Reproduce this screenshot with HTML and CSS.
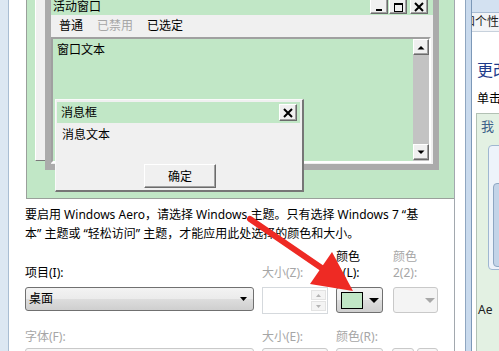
FILE: index.html
```html
<!DOCTYPE html>
<html lang="zh-CN">
<head>
<meta charset="utf-8">
<title>窗口颜色和外观</title>
<link rel="stylesheet" href="styles.css">
</head>
<body>
<div class="frame-left"></div>
<div class="dialog">
  <div class="preview">
    <div class="win-inactive"></div>
    <div class="win-active">
      <div class="titlebar">
        <span class="title-text">活动窗口</span>
        <div class="caption-btns">
          <span class="cbtn"><svg width="10" height="10" viewBox="0 0 10 10"><rect x="2" y="7" width="6" height="2" fill="#000"/></svg></span>
          <span class="cbtn"><svg width="10" height="10" viewBox="0 0 10 10"><rect x="1.5" y="1.5" width="8" height="8" fill="none" stroke="#000" stroke-width="1"/><rect x="1" y="1" width="9" height="2" fill="#000"/></svg></span>
          <span class="cbtn close"><svg width="10" height="10" viewBox="0 0 10 10"><path d="M1 1 L9 9 M9 1 L1 9" stroke="#000" stroke-width="2"/></svg></span>
        </div>
      </div>
      <div class="menubar">
        <span>普通</span>
        <span class="disabled">已禁用</span>
        <span>已选定</span>
      </div>
      <div class="client">
        <div class="client-text">窗口文本</div>
        <div class="scrollbar">
          <span class="sbtn"><svg width="8" height="5" viewBox="0 0 8 5"><path d="M0.5 4.5 L4 1 L7.5 4.5 Z" fill="#000"/></svg></span>
          <span class="strack"></span>
          <span class="sbtn down"><svg width="8" height="5" viewBox="0 0 8 5"><path d="M0.5 0.5 L4 4 L7.5 0.5 Z" fill="#000"/></svg></span>
        </div>
      </div>
    </div>
    <div class="msgbox">
      <div class="msg-title">
        <span>消息框</span>
        <span class="cbtn close"><svg width="10" height="10" viewBox="0 0 10 10"><path d="M1 1 L9 9 M9 1 L1 9" stroke="#000" stroke-width="2"/></svg></span>
      </div>
      <div class="msg-body">
        <div class="msg-text">消息文本</div>
        <div class="ok-btn">确定</div>
      </div>
    </div>
  </div>

  <div class="info">要启用 Windows Aero，请选择 Windows 主题。只有选择 Windows 7 “基<br>本” 主题或 “轻松访问” 主题，才能应用此处选择的颜色和大小。</div>

  <div class="row labels1">
    <div class="c1 lbl">项目(I):</div>
    <div class="c2 lbl disabled">大小(Z):</div>
    <div class="c3 lbl">颜色<br>1(L):</div>
    <div class="c4 lbl disabled">颜色<br>2(2):</div>
  </div>
  <div class="row ctrls">
    <div class="c1"><div class="combo"><span>桌面</span><svg width="7" height="4" viewBox="0 0 7 4"><path d="M0 0 L7 0 L3.5 4 Z" fill="#000"/></svg></div></div>
    <div class="c2"><div class="spin"><div class="spin-btns"><span><svg width="5" height="3" viewBox="0 0 5 3"><path d="M0 3 L2.5 0 L5 3 Z" fill="#b4b4b4"/></svg></span><span><svg width="5" height="3" viewBox="0 0 5 3"><path d="M0 0 L2.5 3 L5 0 Z" fill="#b4b4b4"/></svg></span></div></div></div>
    <div class="c3"><div class="colorbtn"><span class="swatch"></span><svg width="10" height="5" viewBox="0 0 10 5"><path d="M0 0 L10 0 L5 5 Z" fill="#000"/></svg></div></div>
    <div class="c4"><div class="colorbtn off"><svg width="10" height="5" viewBox="0 0 10 5"><path d="M0 0 L10 0 L5 5 Z" fill="#a8a8a8"/></svg></div></div>
  </div>
  <div class="row labels2">
    <div class="c1 lbl disabled">字体(F):</div>
    <div class="c2 lbl disabled">大小(E):</div>
    <div class="c3 lbl disabled wide">颜色(R):</div>
  </div>
  <div class="row boxes">
    <div class="c1"><div class="box"></div></div>
    <div class="c2"><div class="box"></div></div>
    <div class="c3"><div class="box"></div></div>
    <div class="c4 pair"><div class="box small"></div><div class="box small"></div></div>
  </div>
</div>
<div class="gap"></div>
<div class="frame-right"></div>
<div class="panel">
  <div class="panel-top"></div>
  <div class="crumb"><span>和个性化</span></div>
  <div class="panel-head">更改</div>
  <div class="panel-sub">单击</div>
  <div class="themes">
    <div class="themes-title">我</div>
    <div class="thumb"><div class="thumb-inner"></div></div>
    <div class="aero">Ae</div>
  </div>
</div>

<svg class="arrow" width="499" height="351" viewBox="0 0 499 351">
  <line x1="250" y1="219" x2="326" y2="271" stroke="#ee2a24" stroke-width="6" stroke-linecap="round"/>
  <polygon points="353,291 310,284 332,252" fill="#ee2a24"/>
</svg>
</body>
</html>
```

FILE: styles.css
```css
* { box-sizing: border-box; }
html, body { margin: 0; padding: 0; }
body {
  width: 499px;
  height: 351px;
  overflow: hidden;
  display: flex;
  background: #fff;
  font-family: "Noto Sans", "Noto Sans CJK SC", sans-serif;
  font-size: 12px;
  color: #000;
  position: relative;
}
.disabled { color: #a6a6a6; }

.frame-left {
  width: 9px;
  flex: none;
  background: #dce7f2;
  border-right: 1px solid #a9bdd2;
}
.dialog {
  width: 446px;
  height: 351px;
  overflow: hidden;
  flex: none;
  background: #fff;
  border-right: 1px solid #a2a8ae;
}

/* preview canvas */
.preview {
  position: relative;
  margin-left: 17px;
  height: 199px;
  background: #c1e7c6;
  border-left: 1px solid #9aa09b;
  border-bottom: 1px solid #9aa09b;
  overflow: hidden;
}
.win-inactive {
  position: absolute;
  left: 8px;
  top: -30px;
  width: 300px;
  height: 191px;
  background: #f0f0f0;
  border-left: 1px solid #fff;
  border-bottom: 1px solid #7a7a7a;
}
.win-active {
  position: absolute;
  left: 18px;
  top: -10px;
  width: 394px;
  height: 180px;
  background: #f0f0f0;
  border: 6px solid #ababab;
  display: flex;
  flex-direction: column;
}
.titlebar {
  height: 19px;
  flex: none;
  background: #c1e7c6;
  display: flex;
  justify-content: space-between;
  align-items: flex-end;
  padding: 0 5px 1px 2px;
}
.title-text { line-height: 14px; margin-bottom: 0; }
.caption-btns { display: flex; gap: 1px; }
.cbtn {
  width: 18px;
  height: 15px;
  display: flex;
  align-items: center;
  justify-content: center;
  background: #f0f0f0;
  border-top: 1px solid #fff;
  border-left: 1px solid #fff;
  border-right: 1px solid #6b6b6b;
  border-bottom: 1px solid #6b6b6b;
  box-shadow: inset -1px -1px 0 #a0a0a0;
}
.caption-btns .close { margin-left: 2px; }
.menubar {
  height: 22px;
  flex: none;
  display: flex;
  align-items: center;
  gap: 14px;
  padding-left: 8px;
  line-height: 16px;
}
.client {
  height: 126px;
  flex: none;
  margin-right: 2px;
  background: #c1e7c6;
  border-top: 2px solid #a0a0a0;
  border-left: 2px solid #a0a0a0;
  border-right: 2px solid #fff;
  border-bottom: 2px solid #fff;
  display: flex;
  justify-content: space-between;
}
.client-text { padding: 3px 0 0 4px; line-height: 16px; }
.scrollbar {
  width: 16px;
  display: flex;
  flex-direction: column;
  background: #c3c3c3;
}
.sbtn {
  height: 16px;
  flex: none;
  display: flex;
  align-items: center;
  justify-content: center;
  background: #f0f0f0;
  border-top: 1px solid #fff;
  border-left: 1px solid #fff;
  border-right: 1px solid #6b6b6b;
  border-bottom: 1px solid #6b6b6b;
  box-shadow: inset -1px -1px 0 #a0a0a0;
}
.sbtn.down { margin-bottom: 1px; }
.strack { flex: 1; }

.msgbox {
  position: absolute;
  left: 28px;
  top: 99px;
  width: 249px;
  height: 93px;
  background: #f0f0f0;
  border-top: 1px solid #fafafa;
  border-left: 1px solid #fafafa;
  border-right: 2px solid #767676;
  border-bottom: 2px solid #767676;
  padding: 2px 2px 0 1px;
}
.msg-title {
  height: 21px;
  background: #c1e7c6;
  display: flex;
  justify-content: space-between;
  align-items: center;
  padding: 0 3px 0 4px;
  line-height: 16px;
}
.msg-title .cbtn { height: 17px; }
.msg-body { padding: 4px 0 0 5px; }
.msg-text { line-height: 16px; }
.ok-btn {
  margin: 21px 0 0 82px;
  width: 72px;
  height: 24px;
  display: flex;
  align-items: center;
  justify-content: center;
  background: #f0f0f0;
  border-top: 1px solid #fff;
  border-left: 1px solid #fff;
  border-right: 1px solid #6b6b6b;
  border-bottom: 1px solid #6b6b6b;
  box-shadow: inset -1px -1px 0 #a0a0a0;
}

/* text + controls */
.info {
  margin: 6px 0 0 16px;
  line-height: 19px;
  white-space: nowrap;
}
.row {
  display: flex;
  padding-left: 16px;
}
.c1 { width: 229px; flex: none; }
.c2 { width: 66px; flex: none; margin-left: 8px; }
.c3 { width: 47px; flex: none; margin-left: 8px; }
.c4 { width: 45px; flex: none; margin-left: 10px; }
.lbl { line-height: 16px; }
.lbl.wide { white-space: nowrap; }
.labels1 { margin-top: 6px; height: 32px; align-items: flex-end; }
.ctrls { margin-top: 6px; height: 27px; }
.labels2 { margin-top: 15px; height: 16px; }
.boxes { margin-top: 3px; height: 24px; }

.combo {
  height: 24px;
  border: 1px solid #707070;
  border-radius: 3px;
  background: linear-gradient(#f3f3f3 0%, #ebebeb 50%, #dddddd 51%, #cfcfcf 100%);
  display: flex;
  align-items: center;
  justify-content: space-between;
  padding: 0 6px 0 3px;
}
.combo span { line-height: 16px; }
.spin {
  height: 27px;
  border: 1px solid #d5d9dd;
  background: #fff;
  display: flex;
  justify-content: flex-end;
  padding: 2px 1px 2px 0;
}
.spin-btns {
  width: 15px;
  display: flex;
  flex-direction: column;
  gap: 1px;
}
.spin-btns span {
  flex: 1;
  border: 1px solid #e3e3e3;
  background: #f4f4f4;
  display: flex;
  align-items: center;
  justify-content: center;
}
.colorbtn {
  height: 26px;
  border: 1px solid #707070;
  border-radius: 3px;
  background: linear-gradient(#f3f3f3 0%, #ebebeb 50%, #dddddd 51%, #cfcfcf 100%);
  display: flex;
  align-items: center;
  padding: 0 3px 0 4px;
  gap: 6px;
}
.swatch {
  width: 22px;
  height: 17px;
  background: #c1e7c6;
  border: 1px solid #000;
}
.colorbtn.off {
  border-color: #c9c9c9;
  background: #f4f4f4;
  justify-content: flex-end;
  padding-right: 2px;
}
.box {
  height: 24px;
  border: 1px solid #c9c9c9;
  border-radius: 3px;
  background: #f7f7f7;
}
.pair { display: flex; gap: 3px; margin-left: 9px; width: 46px; }
.box.small { flex: 1; }

.gap { width: 10px; flex: none; background: #fff; }
.frame-right {
  width: 7px;
  flex: none;
  background: #c9daed;
  border-left: 1px solid #8fa6c0;
  border-right: 1px solid #7c98b8;
}
.panel {
  flex: 1;
  overflow: hidden;
  background: #fff;
  display: flex;
  flex-direction: column;
}
.panel-top {
  height: 13px;
  flex: none;
  background: #d3e1f1;
  border-bottom: 1px solid #a9bdd4;
}
.crumb {
  height: 19px;
  flex: none;
  background: #f2f4f7;
  border-bottom: 1px solid #c7d1dc;
  white-space: nowrap;
  overflow: hidden;
  line-height: 17px;
}
.crumb span { display: inline-block; margin-left: -9px; color: #1b1b1b; }
.panel-head {
  margin: 28px 0 0 5px;
  font-size: 16px;
  line-height: 20px;
  color: #1e3b8b;
  white-space: nowrap;
}
.panel-sub {
  margin: 11px 0 0 5px;
  line-height: 16px;
  white-space: nowrap;
}
.themes {
  flex: 1;
  margin: 6px 0 0 4px;
  background: #e3f1e3;
  border-left: 1px solid #b2c1b4;
  border-top: 1px solid #b2c1b4;
  display: flex;
  flex-direction: column;
  white-space: nowrap;
}
.themes-title {
  margin: 4px 0 0 4px;
  font-size: 13px;
  line-height: 17px;
  color: #3e628a;
}
.thumb {
  margin: 10px 0 0 11px;
  height: 125px;
  width: 30px;
  flex: none;
  background: #edf3fa;
  border: 1px solid #9fb7d1;
  border-radius: 4px;
  padding: 37px 0 0 4px;
}
.thumb-inner {
  height: 84px;
  background: #c3d4e8;
  border: 1px solid #8ea7c3;
  border-radius: 4px;
}
.aero {
  margin: 32px 0 0 1px;
  line-height: 16px;
  color: #222;
}

.arrow {
  position: absolute;
  left: 0;
  top: 0;
  pointer-events: none;
}
```
